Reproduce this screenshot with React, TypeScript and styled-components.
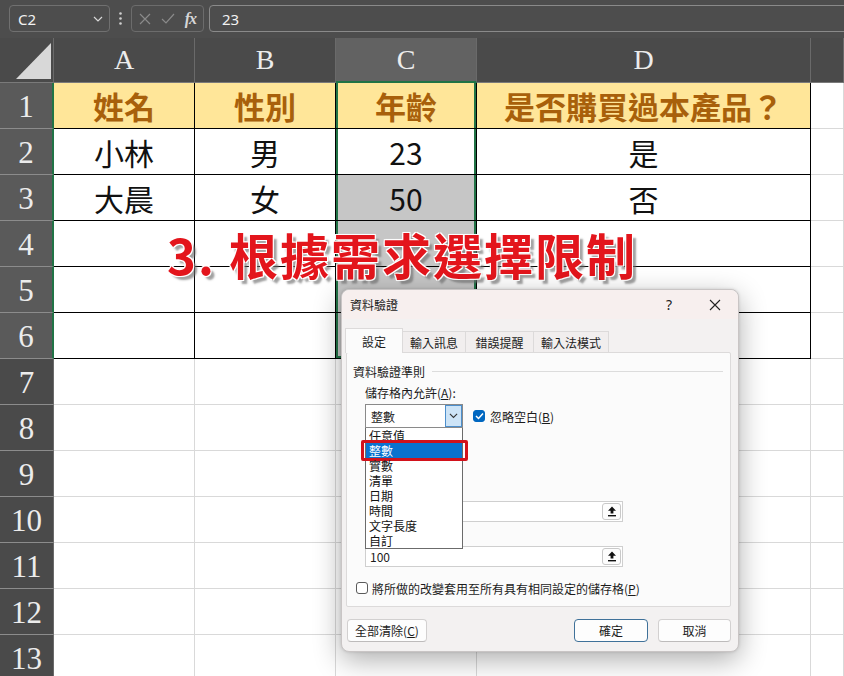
import React from "react";
import styled, { createGlobalStyle } from "styled-components";

const CJK = `"Noto Sans CJK TC", "Noto Sans", sans-serif`;
const SERIF = `"Liberation Serif", "DejaVu Serif", serif`;
const GREEN = "#217346";

const GlobalStyle = createGlobalStyle`
  html, body { margin: 0; padding: 0; }
  body {
    width: 844px;
    height: 676px;
    overflow: hidden;
    background: #fff;
    font-family: ${CJK};
  }
`;

const Screen = styled.div`
  position: relative;
  width: 844px;
  height: 676px;
  overflow: hidden;
`;

/* ---------- formula bar ---------- */

const FormulaBar = styled.div`
  height: 38px;
  box-sizing: border-box;
  padding: 5px 0 0 9px;
  background: #4d4d4d;
  display: flex;
  align-items: flex-start;
`;

const NameBox = styled.div`
  width: 101px;
  height: 27px;
  box-sizing: border-box;
  border: 1px solid #707070;
  border-radius: 4px;
  padding: 0 6px 0 8px;
  display: flex;
  align-items: center;
  justify-content: space-between;
  color: #f2f2f2;
  font-family: "Noto Sans", sans-serif;
  font-size: 15px;
`;

const Dots = styled.div`
  width: 21px;
  height: 27px;
  display: flex;
  align-items: center;
  justify-content: center;
`;

const FxBox = styled.div`
  width: 73px;
  height: 27px;
  box-sizing: border-box;
  border: 1px solid #6c6c6c;
  border-radius: 4px;
  display: flex;
  align-items: center;
  justify-content: space-around;
  padding: 0 2px;
`;

const Fx = styled.span`
  font-family: ${SERIF};
  font-style: italic;
  font-weight: 700;
  font-size: 16px;
  color: #d6d6d6;
  letter-spacing: -1px;
`;

const FormulaInput = styled.div`
  flex: 1;
  height: 27px;
  box-sizing: border-box;
  margin: 0 -6px 0 5px;
  border: 1px solid #8a8a8a;
  border-radius: 4px;
  padding-left: 12px;
  display: flex;
  align-items: center;
  color: #f2f2f2;
  font-family: "Noto Sans", sans-serif;
  font-size: 15px;
`;

/* ---------- sheet ---------- */

const Sheet = styled.div`
  display: grid;
  grid-template-columns: 54px 141px 141px 141px 334px 1fr;
  grid-template-rows: 45px;
  grid-auto-rows: 46px;
`;

const Corner = styled.div`
  background: #4a4a4a;
  border-right: 1px solid #6a6a6a;
  border-bottom: 1px solid #7a7a7a;
  box-sizing: border-box;
  svg { display: block; }
`;

const ColHead = styled.div<{ $active?: boolean }>`
  box-sizing: border-box;
  background: ${(p) => (p.$active ? "#626262" : "#4a4a4a")};
  border-right: 1px solid #6a6a6a;
  border-bottom: ${(p) => (p.$active ? `2px solid ${GREEN}` : "1px solid #7a7a7a")};
  display: flex;
  align-items: center;
  justify-content: center;
  color: #ececec;
  font-family: ${SERIF};
  font-size: 28px;
`;

const RowHead = styled.div<{ $sel?: boolean }>`
  box-sizing: border-box;
  background: ${(p) => (p.$sel ? "#5a5a5a" : "#4a4a4a")};
  border-bottom: 1px solid #8c8c8c;
  border-right: ${(p) => (p.$sel ? `2px solid ${GREEN}` : "1px solid #6a6a6a")};
  display: flex;
  align-items: center;
  justify-content: center;
  color: #ececec;
  font-family: ${SERIF};
  font-size: 31px;
  padding-top: 2px;
`;

type Tone = "head" | "plain" | "shade";

const Cell = styled.div<{ $tone: Tone; $table: boolean; $sel?: boolean; $selEnd?: boolean }>`
  box-sizing: border-box;
  border-right: 1px solid ${(p) => (p.$table ? "#000" : "#d9d9d9")};
  border-bottom: 1px solid ${(p) => (p.$table ? "#000" : "#d9d9d9")};
  background: ${(p) =>
    p.$tone === "head" ? "#ffe699" : p.$tone === "shade" ? "#c6c6c6" : "#fff"};
  color: ${(p) => (p.$tone === "head" ? "#a8600b" : "#111")};
  font-family: ${CJK};
  font-size: ${(p) => (p.$tone === "head" ? "31px" : "30px")};
  font-weight: ${(p) => (p.$tone === "head" ? 700 : 400)};
  line-height: 1;
  display: flex;
  align-items: center;
  justify-content: center;
  box-shadow: ${(p) =>
    p.$sel
      ? `inset 2px 0 0 ${GREEN}, inset -2px 0 0 ${GREEN}${p.$selEnd ? `, inset 0 -2px 0 ${GREEN}` : ""}`
      : "none"};
`;

/* ---------- annotation ---------- */

const Annotation = styled.div`
  position: absolute;
  left: 167px;
  top: 229px;
  z-index: 3;
  white-space: nowrap;
  font-family: ${CJK};
  font-weight: 700;
  font-size: 49px;
  line-height: 1;
  letter-spacing: 2px;
  color: #e3151c;
  text-shadow: -1px -1px 0 #fff, 1px -1px 0 #fff, -1px 1px 0 #fff, 1px 1px 0 #fff,
    0 0 2px #fff, 4px 4px 2px rgba(110, 110, 110, 0.65);
`;

/* ---------- dialog ---------- */

const Dialog = styled.div`
  position: absolute;
  left: 341px;
  top: 289px;
  z-index: 4;
  width: 398px;
  height: 363px;
  box-sizing: border-box;
  border: 1px solid #c9c5c5;
  border-radius: 8px;
  background: #f3f1f1;
  box-shadow: 0 8px 28px rgba(0, 0, 0, 0.32), 0 0 3px rgba(0, 0, 0, 0.15);
  display: flex;
  flex-direction: column;
  font-family: ${CJK};
  font-size: 12px;
  color: #1b1b1b;
`;

const TitleBar = styled.div`
  height: 29px;
  flex: none;
  display: flex;
  align-items: center;
  padding-left: 8px;
  background: #f7efee;
  border-radius: 8px 8px 0 0;
`;

const TitleButton = styled.div<{ $first?: boolean }>`
  width: 46px;
  height: 29px;
  display: flex;
  align-items: center;
  justify-content: center;
  margin-left: ${(p) => (p.$first ? "auto" : "0")};
  font-family: "Noto Sans", sans-serif;
  font-size: 14px;
  color: #222;
`;

const Tabs = styled.div`
  height: 24px;
  margin: 9px 0 0 3px;
  display: flex;
  align-items: flex-end;
`;

const Tab = styled.div<{ $w: number; $active?: boolean }>`
  position: relative;
  z-index: ${(p) => (p.$active ? 1 : 0)};
  width: ${(p) => p.$w}px;
  height: ${(p) => (p.$active ? 25 : 21)}px;
  margin-bottom: ${(p) => (p.$active ? -1 : 0)}px;
  margin-right: -1px;
  box-sizing: border-box;
  border: 1px solid #dcdada;
  border-bottom: none;
  background: ${(p) => (p.$active ? "#fbfbfb" : "#f1eeee")};
  display: flex;
  align-items: center;
  justify-content: center;
  padding-top: ${(p) => (p.$active ? 1 : 0)}px;
`;

const Panel = styled.div`
  width: 385px;
  height: 255px;
  margin-left: 4px;
  box-sizing: border-box;
  border: 1px solid #dcdada;
  border-radius: 2px;
  background: #fbfbfb;
  display: flex;
  flex-direction: column;
`;

const GroupLabel = styled.div`
  margin-top: 10px;
  height: 16px;
  padding-left: 6px;
  display: flex;
  align-items: center;
`;

const Rule = styled.div`
  flex: 1;
  height: 1px;
  margin: 0 7px;
  background: #dcdcdc;
`;

const Label = styled.div`
  margin-top: 6px;
  height: 16px;
  line-height: 16px;
  padding-left: 18px;
`;

const ComboRow = styled.div`
  margin-top: 3px;
  padding-left: 18px;
  display: flex;
  align-items: center;
  height: 24px;
`;

const ComboWrap = styled.div`
  position: relative;
  z-index: 5;
  width: 98px;
  height: 24px;
`;

const ComboFace = styled.div`
  position: relative;
  z-index: 2;
  width: 98px;
  height: 24px;
  box-sizing: border-box;
  border: 1px solid #8a8a8a;
  background: #fff;
  display: flex;
  align-items: center;
  padding-left: 5px;
`;

const ComboButton = styled.div`
  margin-left: auto;
  width: 17px;
  height: 100%;
  box-sizing: border-box;
  border: 1px solid #4d8fcc;
  background: #cde4f7;
  display: flex;
  align-items: center;
  justify-content: center;
`;

const DropList = styled.div`
  position: absolute;
  z-index: 1;
  left: 0;
  top: 23px;
  width: 98px;
  box-sizing: border-box;
  border: 1px solid #6b6b6b;
  background: #fff;
`;

const DropItem = styled.div<{ $sel?: boolean }>`
  position: relative;
  height: 15px;
  line-height: 15px;
  padding-left: 3px;
  background: ${(p) => (p.$sel ? "#0a72cf" : "transparent")};
  color: ${(p) => (p.$sel ? "#fff" : "#111")};
`;

const RedBox = styled.div`
  position: absolute;
  left: -5px;
  right: -6px;
  top: -3px;
  bottom: -3px;
  border: 3px solid #d2121c;
  border-radius: 2px;
`;

const CheckBox = styled.div<{ $on?: boolean }>`
  width: 12px;
  height: 12px;
  box-sizing: border-box;
  border-radius: 3px;
  border: 1px solid ${(p) => (p.$on ? "#0067c0" : "#5a5a5a")};
  background: ${(p) => (p.$on ? "#0067c0" : "#fff")};
  display: flex;
  align-items: center;
  justify-content: center;
  flex: none;
`;

const IgnoreBlank = styled.div`
  margin-left: 10px;
  display: flex;
  align-items: center;
  gap: 5px;
`;

const RangeInput = styled.div<{ $gap: number }>`
  margin: ${(p) => p.$gap}px 0 0 18px;
  width: 258px;
  height: 21px;
  box-sizing: border-box;
  border: 1px solid #cfcfcf;
  background: #fff;
  display: flex;
  align-items: center;
  padding: 0 1px 0 4px;
`;

const CollapseButton = styled.div`
  margin-left: auto;
  width: 19px;
  height: 17px;
  box-sizing: border-box;
  border: 1px solid #c9c9c9;
  border-radius: 3px;
  background: #fdfdfd;
  display: flex;
  align-items: center;
  justify-content: center;
`;

const CheckRow = styled.div`
  margin: 13px 0 0 9px;
  height: 16px;
  display: flex;
  align-items: center;
  gap: 4px;
`;

const Footer = styled.div`
  margin-top: 12px;
  padding: 0 7px 0 5px;
  display: flex;
  gap: 10px;
`;

const Button = styled.div<{ $w: number; $primary?: boolean; $push?: boolean }>`
  width: ${(p) => p.$w}px;
  height: 23px;
  box-sizing: border-box;
  margin-left: ${(p) => (p.$push ? "auto" : "0")};
  border: 1px solid ${(p) => (p.$primary ? "#3f7199" : "#d2d0d0")};
  border-bottom-color: ${(p) => (p.$primary ? "#3f7199" : "#bdbbbb")};
  border-radius: 4px;
  background: #fdfdfd;
  display: flex;
  align-items: center;
  justify-content: center;
`;

/* ---------- icons ---------- */

const Chevron = ({ color, w = 10 }: { color: string; w?: number }) => (
  <svg width={w} height={w * 0.6} viewBox="0 0 10 6">
    <polyline points="1,1 5,5 9,1" fill="none" stroke={color} strokeWidth="1.2" />
  </svg>
);

const Tick = () => (
  <svg width="9" height="8" viewBox="0 0 9 8">
    <polyline points="1,4 3.5,6.5 8,1.5" fill="none" stroke="#fff" strokeWidth="1.5" />
  </svg>
);

const CollapseIcon = () => (
  <svg width="10" height="11" viewBox="0 0 10 11">
    <path d="M5 0.5 L1 4.8 H3.6 V7.6 H6.4 V4.8 H9 Z" fill="#111" />
    <rect x="1" y="9" width="8" height="1.4" fill="#111" />
  </svg>
);

const items = ["任意值", "整數", "實數", "清單", "日期", "時間", "文字長度", "自訂"];

const table: string[][] = [
  ["姓名", "性別", "年齡", "是否購買過本產品？"],
  ["小林", "男", "23", "是"],
  ["大晨", "女", "50", "否"],
  ["", "", "", ""],
  ["", "", "", ""],
  ["", "", "", ""],
];

export default function App() {
  return (
    <Screen>
      <GlobalStyle />
      <FormulaBar>
        <NameBox>
          <span>C2</span>
          <Chevron color="#d8d8d8" />
        </NameBox>
        <Dots>
          <svg width="3" height="13" viewBox="0 0 3 13">
            <circle cx="1.5" cy="1.5" r="1.3" fill="#cfcfcf" />
            <circle cx="1.5" cy="6.5" r="1.3" fill="#cfcfcf" />
            <circle cx="1.5" cy="11.5" r="1.3" fill="#cfcfcf" />
          </svg>
        </Dots>
        <FxBox>
          <svg width="12" height="12" viewBox="0 0 12 12">
            <path d="M1 1 L11 11 M11 1 L1 11" stroke="#8a8a8a" strokeWidth="1.2" />
          </svg>
          <svg width="14" height="11" viewBox="0 0 14 11">
            <polyline points="1,6 5,10 13,1" fill="none" stroke="#8a8a8a" strokeWidth="1.2" />
          </svg>
          <Fx>fx</Fx>
        </FxBox>
        <FormulaInput>23</FormulaInput>
      </FormulaBar>

      <Sheet>
        <Corner>
          <svg width="53" height="44" viewBox="0 0 53 44">
            <polygon points="16,41 51,41 51,5" fill="#d8d8d8" />
          </svg>
        </Corner>
        {["A", "B", "C", "D", ""].map((c) => (
          <ColHead key={c || "E"} $active={c === "C"}>
            {c}
          </ColHead>
        ))}
        {Array.from({ length: 13 }, (_, r) => {
          const inTable = r < 6;
          return (
            <React.Fragment key={r}>
              <RowHead $sel={inTable}>{r + 1}</RowHead>
              {[0, 1, 2, 3].map((c) => {
                const text = inTable ? table[r][c] : "";
                const tone: Tone =
                  r === 0 ? "head" : c === 2 && r >= 2 && r < 6 ? "shade" : "plain";
                return (
                  <Cell
                    key={c}
                    $tone={tone}
                    $table={inTable}
                    $sel={c === 2 && inTable}
                    $selEnd={c === 2 && r === 5}
                  >
                    {text}
                  </Cell>
                );
              })}
              <Cell $tone="plain" $table={false} />
            </React.Fragment>
          );
        })}
      </Sheet>

      <Annotation>3. 根據需求選擇限制</Annotation>

      <Dialog>
        <TitleBar>
          資料驗證
          <TitleButton $first>?</TitleButton>
          <TitleButton>
            <svg width="12" height="12" viewBox="0 0 12 12">
              <path d="M1 1 L11 11 M11 1 L1 11" stroke="#222" strokeWidth="1.1" />
            </svg>
          </TitleButton>
        </TitleBar>
        <Tabs>
          <Tab $w={58} $active>
            設定
          </Tab>
          <Tab $w={64}>輸入訊息</Tab>
          <Tab $w={69}>錯誤提醒</Tab>
          <Tab $w={76}>輸入法模式</Tab>
        </Tabs>
        <Panel>
          <GroupLabel>
            資料驗證準則
            <Rule />
          </GroupLabel>
          <Label>
            儲存格內允許(<u>A</u>):
          </Label>
          <ComboRow>
            <ComboWrap>
              <ComboFace>
                整數
                <ComboButton>
                  <Chevron color="#333" w={9} />
                </ComboButton>
              </ComboFace>
              <DropList>
                {items.map((it) => (
                  <DropItem key={it} $sel={it === "整數"}>
                    {it}
                    {it === "整數" && <RedBox />}
                  </DropItem>
                ))}
              </DropList>
            </ComboWrap>
            <IgnoreBlank>
              <CheckBox $on>
                <Tick />
              </CheckBox>
              <span>
                忽略空白(<u>B</u>)
              </span>
            </IgnoreBlank>
          </ComboRow>
          <RangeInput $gap={73}>
            <CollapseButton>
              <CollapseIcon />
            </CollapseButton>
          </RangeInput>
          <RangeInput $gap={24}>
            100
            <CollapseButton>
              <CollapseIcon />
            </CollapseButton>
          </RangeInput>
          <CheckRow>
            <CheckBox />
            <span>
              將所做的改變套用至所有具有相同設定的儲存格(<u>P</u>)
            </span>
          </CheckRow>
        </Panel>
        <Footer>
          <Button $w={80}>
            全部清除(<u>C</u>)
          </Button>
          <Button $w={74} $primary $push>
            確定
          </Button>
          <Button $w={73}>取消</Button>
        </Footer>
      </Dialog>
    </Screen>
  );
}
